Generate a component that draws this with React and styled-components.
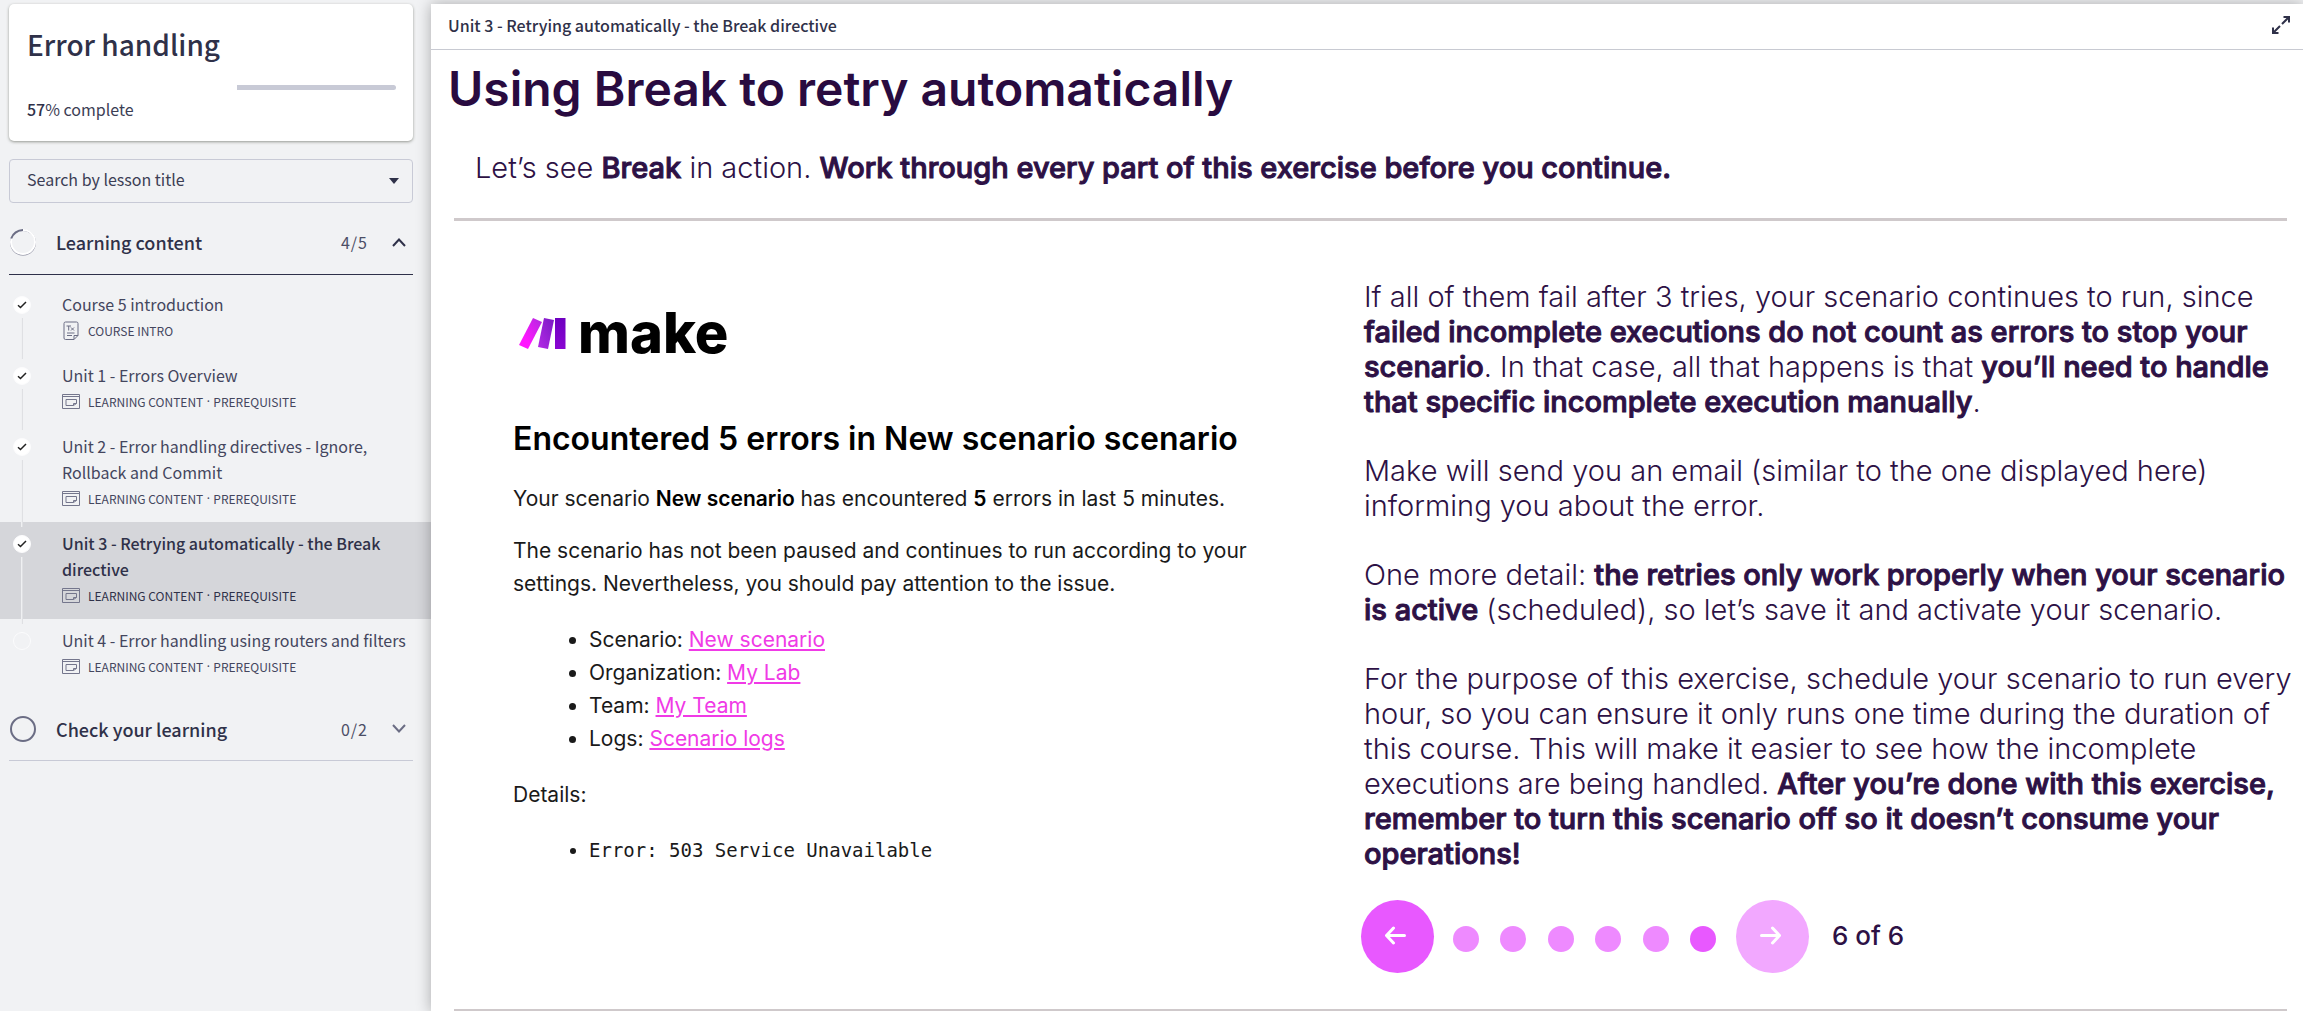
import React from "react";
import styled, { createGlobalStyle, css } from "styled-components";

const GlobalStyle = createGlobalStyle`
  *, *::before, *::after { box-sizing: border-box; }
  body {
    margin: 0;
    background: #f1f2f4;
    color: #2f3149;
    font-family: "Noto Sans CJK SC", "Noto Sans", sans-serif;
  }
  h1, h2, h3, p, ul, ol { margin: 0; padding: 0; }
  button, select { font: inherit; color: inherit; }
`;

const Page = styled.div`
  display: flex;
  min-height: 100vh;
  padding-top: 4px;
`;

/* Sidebar */

const Sidebar = styled.aside`
  flex: 0 0 431px;
  min-width: 0;
`;

const CourseCard = styled.section`
  margin: 0 18px 18px 9px;
  padding: 20px 17px 18px 18px;
  background: #fff;
  border-radius: 5px;
  box-shadow: 0 1px 3px rgba(60, 64, 50, 0.5);
`;

const CourseTitle = styled.h1`
  font-size: 28px;
  line-height: 40px;
  font-weight: 500;
`;

const ProgressTrack = styled.div`
  display: flex;
  justify-content: flex-end;
  height: 5px;
  margin: 21px 0 5px;
`;

const ProgressRest = styled.div`
  height: 5px;
  border-radius: 0 3px 3px 0;
  background: #c8cad6;
`;

const ProgressText = styled.p`
  font-size: 16px;
  line-height: 28px;
  color: #3c3e55;
  strong { font-weight: 500; color: #2f3149; }
`;

const SelectWrap = styled.label`
  display: grid;
  align-items: center;
  margin: 0 18px 0 9px;
  > * { grid-area: 1 / 1; }
  svg { justify-self: end; margin-right: 14px; pointer-events: none; }
`;

const LessonSelect = styled.select`
  appearance: none;
  width: 100%;
  height: 44px;
  padding: 0 17px 4px;
  border: 1px solid #c8cad6;
  border-radius: 4px;
  background: #f1f2f4;
  color: #3c3e55;
  font-size: 16px;
`;

const SectionButton = styled.button`
  display: flex;
  align-items: center;
  width: calc(100% - 27px);
  height: ${(p) => (p.$open ? 72 : 71)}px;
  margin: 0 18px 0 9px;
  padding: 7px 7px 0 1px;
  border: 0;
  border-bottom: 1px solid ${(p) => (p.$open ? "#2f3149" : "#c8cad6")};
  background: none;
  text-align: left;
`;

const SectionTitle = styled.span`
  flex: 1;
  margin-left: 20px;
  font-size: 18px;
  line-height: 26px;
  font-weight: 500;
`;

const SectionCount = styled.span`
  margin-right: 24px;
  font-size: 16px;
  line-height: 26px;
  letter-spacing: 1px;
  color: #4c4e66;
`;

const LessonList = styled.ol`
  list-style: none;
  padding: 8px 0 0;
`;

const Lesson = styled.li`
  display: flex;
  padding-left: 13px;
  ${(p) => p.$active && css`background: #d5d6da;`}
`;

const Rail = styled.span`
  display: flex;
  flex-direction: column;
  align-items: center;
  flex: 0 0 18px;
  margin: 13px 31px -9px 0;
`;

const Marker = styled.span`
  display: flex;
  align-items: center;
  justify-content: center;
  flex: 0 0 18px;
  width: 18px;
  border: 1px solid #fcfcfd;
  border-radius: 50%;
  background: ${(p) => (p.$done ? "#fff" : "transparent")};
`;

const RailLine = styled.span`
  position: relative;
  flex: 1;
  width: 2px;
  margin: 4px 0;
  background: #dfe0e3;
  box-shadow: inset 1px 0 #eff0f2;
`;

const LessonLink = styled.a`
  flex: 1;
  min-width: 0;
  padding: 8px 18px 10px 0;
  color: ${(p) => (p.$active ? "#2f3149" : "#44465e")};
  text-decoration: none;
  font-size: 16px;
  line-height: 26px;
  font-weight: ${(p) => (p.$active ? 500 : 400)};
`;

const Meta = styled.span`
  display: flex;
  align-items: center;
  height: 27px;
  font-size: 12px;
  font-weight: 400;
  svg { flex: 0 0 18px; margin-right: 8px; }
`;

const Separator = styled.span`
  width: 10px;
  font-family: "Noto Sans", sans-serif;
  text-align: center;
`;

/* Main pane */

const Main = styled.main`
  position: relative;
  flex: 1;
  min-width: 0;
  background: #fff;
  box-shadow: 0 0 14px rgba(0, 0, 0, 0.3);
`;

const TopBar = styled.header`
  display: flex;
  align-items: center;
  justify-content: space-between;
  height: 46px;
  padding: 0 13px 3px 17px;
  border-bottom: 1px solid #c8cad2;
  font-size: 16px;
  font-weight: 500;
`;

const IconButton = styled.button`
  display: flex;
  padding: 0;
  border: 0;
  background: none;
`;

const Slide = styled.article`
  padding: 0 16px 0 23px;
  color: #2d1145;
  font-family: Inter, "Open Sans", sans-serif;
`;

const SlideTitle = styled.h2`
  margin-left: -6px;
  padding-top: 9px;
  font-size: 48px;
  line-height: 60px;
  font-weight: 600;
  color: #290b40;
`;

const Strong = styled.strong`
  font-weight: 500;
  -webkit-text-stroke: 1px currentColor;
  paint-order: stroke;
`;

const Intro = styled.p`
  padding: 31px 21px 33px;
  font-size: 29px;
  line-height: 35px;
  font-weight: 300;
`;

const Rule = styled.hr`
  height: 3px;
  margin: 0;
  border: 0;
  background: #cfc9cb;
`;

const Columns = styled.div`
  display: grid;
  grid-template-columns: 910fr 923fr;
`;

const Email = styled.section`
  max-width: 815px;
  padding: 82px 0 0 59px;
  color: #1a1a1a;
  font-size: 21px;
  line-height: 33px;
  a { color: #f03ae6; text-decoration: underline; }
  strong { font-weight: 600; color: #000; }
`;

const Logo = styled.div`
  display: flex;
  align-items: center;
  height: 60px;
  padding-left: 6px;
  color: #000;
  font-size: 56px;
  line-height: 60px;
  font-weight: 800;
  svg { margin-right: 11px; }
`;

const EmailTitle = styled.h3`
  margin: 56px 0 23px;
  color: #000;
  font-size: 32px;
  line-height: 40px;
  font-weight: 600;
  white-space: nowrap;
`;

const EmailText = styled.p`
  margin-bottom: 19px;
`;

const EmailList = styled.ul`
  margin: 23px 0;
  padding-left: 76px;
  ${(p) => p.$mono && css`
    font-family: "DejaVu Sans Mono", "Liberation Mono", monospace;
    font-size: 19px;
  `}
`;

const Lecture = styled.section`
  margin-right: -12px;
  padding-top: 58px;
  font-size: 29px;
  line-height: 35px;
  font-weight: 300;
  p { margin-bottom: 34px; }
`;

const Pager = styled.nav`
  display: flex;
  align-items: center;
  height: 73px;
  margin: -5px 0 36px -3px;
`;

const PagerButton = styled.button`
  display: flex;
  align-items: center;
  justify-content: center;
  width: 73px;
  height: 73px;
  padding: 0 4px 3px 0;
  border: 0;
  border-radius: 50%;
  background: ${(p) => (p.disabled ? "#f2a8ff" : "#e858ff")};
`;

const Dots = styled.div`
  display: flex;
  justify-content: space-between;
  width: 263px;
  margin: 4px 20px 0 19px;
`;

const Dot = styled.button`
  width: 26px;
  height: 26px;
  padding: 0;
  border: 0;
  border-radius: 50%;
  background: ${(p) => (p.$current ? "#e858ff" : "#ee8aff")};
`;

const PageCount = styled.span`
  margin-left: 23px;
  padding-bottom: 2px;
  font-size: 26px;
  font-weight: 500;
`;

/* Icons */

const Check = () => (
  <svg width="10" height="8" viewBox="0 0 10 8" fill="none" stroke="#222" strokeWidth="1.5" aria-hidden="true">
    <path d="M1 4.2 3.5 6.5 9 1" />
  </svg>
);

const DocIcon = () => (
  <svg width="18" height="20" viewBox="0 0 18 20" fill="none" stroke="#6b6d84" aria-hidden="true">
    <path d="M12 18.5H3.5a1.5 1.5 0 0 1-1.5-1.5V2.5A1.5 1.5 0 0 1 3.5 1H14.5A1.5 1.5 0 0 1 16 2.5V14.5ZM12 18.5V14.5H16" />
    <path d="M4.5 5H9M6.7 5V9.5M9 6.5 12 9.5M12 6.5 9 9.5M5 12H12.5M5 14.5H10" />
  </svg>
);

const SlideIcon = () => (
  <svg width="18" height="15" viewBox="0 0 18 15" fill="none" stroke="#74768c" aria-hidden="true">
    <path d="M.5 .5H17.5V14.5H.5ZM.5 2.5H17.5" />
    <path d="M11.5 11.5H4V5.5H14.5V9.5ZM11.5 11.5V9.5H14.5" />
  </svg>
);

const Chevron = ({ up }) => (
  <svg width="14" height="9" viewBox="0 0 14 9" fill="none" stroke={up ? "#2f3149" : "#6b6d84"} strokeWidth="2" aria-hidden="true">
    <path d={up ? "M1 8 7 1.5 13 8" : "M1 1 7 7.5 13 1"} />
  </svg>
);

const RingPartial = () => (
  <svg width="26" height="28" viewBox="0 0 26 28" fill="none" aria-hidden="true">
    <circle cx="13" cy="14.5" r="12.3" stroke="#74768c" strokeWidth="1.4" />
    <circle cx="13" cy="14" r="12" stroke="#fff" strokeWidth="2" />
    <path d="M1.2 10.5A12.3 12.3 0 0 1 13 2" stroke="#6b6d84" strokeWidth="2" />
  </svg>
);

const RingEmpty = () => (
  <svg width="26" height="28" viewBox="0 0 26 28" fill="none" aria-hidden="true">
    <circle cx="13" cy="14" r="12" stroke="#6b6d84" strokeWidth="2" />
  </svg>
);

const Expand = () => (
  <svg width="18" height="18" viewBox="0 0 18 18" fill="none" stroke="#2f3149" strokeWidth="2" aria-hidden="true">
    <path d="M10 8 17 1M11.5 1H17V6.5M8 10 1 17M6.5 17H1V11.5" />
  </svg>
);

const Arrow = ({ right }) => (
  <svg width="21" height="19" viewBox="0 0 21 19" fill="none" stroke="#fff" strokeWidth="3" strokeLinecap="round" strokeLinejoin="round" aria-hidden="true">
    <path d={right ? "M1.5 9.5H19M12.5 2 19.5 9.5 12.5 17" : "M19.5 9.5H2M8.5 2 1.5 9.5 8.5 17"} />
  </svg>
);

const MakeMark = () => (
  <svg width="48" height="34" viewBox="0 0 48 34" aria-hidden="true">
    <defs>
      <linearGradient id="m1" x1="0" y1="1" x2="1" y2="0">
        <stop offset="0.3" stopColor="#ff17ff" />
        <stop offset="1" stopColor="#b02ade" />
      </linearGradient>
      <linearGradient id="m2" x1="0" y1="1" x2="1" y2="0">
        <stop offset="0" stopColor="#b42be6" />
        <stop offset="1" stopColor="#7a18c4" />
      </linearGradient>
      <linearGradient id="m3" x1="0" y1="1" x2="0" y2="0">
        <stop offset="0" stopColor="#8a06d2" />
        <stop offset="1" stopColor="#6e00c0" />
      </linearGradient>
    </defs>
    <path d="M14 2 23 6 9 33 0 29Z" fill="url(#m1)" />
    <path d="M25 2 35 4 29 33 19 31Z" fill="url(#m2)" />
    <path d="M36 2H46.5V33H36Z" fill="url(#m3)" />
  </svg>
);

const lessons = [
  { title: "Course 5 introduction", intro: true, done: true },
  { title: "Unit 1 - Errors Overview", done: true },
  { title: "Unit 2 - Error handling directives - Ignore, Rollback and Commit", done: true },
  { title: "Unit 3 - Retrying automatically - the Break directive", done: true, active: true },
  { title: "Unit 4 - Error handling using routers and filters" },
];

const emailLinks = [
  ["Scenario", "New scenario"],
  ["Organization", "My Lab"],
  ["Team", "My Team"],
  ["Logs", "Scenario logs"],
];

export default function App() {
  return (
    <>
      <GlobalStyle />
      <Page>
        <Sidebar>
          <CourseCard>
            <CourseTitle>Error handling</CourseTitle>
            <ProgressTrack role="progressbar" aria-label="Course progress" aria-valuenow={57} aria-valuemin={0} aria-valuemax={100}>
              <ProgressRest style={{ width: `${100 - 57}%` }} />
            </ProgressTrack>
            <ProgressText><strong>57</strong>% complete</ProgressText>
          </CourseCard>
          <SelectWrap>
            <LessonSelect aria-label="Search by lesson title" defaultValue="">
              <option value="">Search by lesson title</option>
            </LessonSelect>
            <svg width="10" height="6" viewBox="0 0 10 6" fill="#2f3149" aria-hidden="true"><path d="M0 0H10L5 6Z" /></svg>
          </SelectWrap>
          <SectionButton $open aria-expanded="true">
            <RingPartial />
            <SectionTitle>Learning content</SectionTitle>
            <SectionCount>4/5</SectionCount>
            <Chevron up />
          </SectionButton>
          <LessonList>
            {lessons.map((l, i) => (
              <Lesson key={l.title} $active={l.active}>
                <Rail>
                  <Marker $done={l.done}>{l.done && <Check />}</Marker>
                  {i < lessons.length - 1 && <RailLine />}
                </Rail>
                <LessonLink href="#" $active={l.active}>
                  {l.title}
                  {l.intro ? (
                    <Meta><DocIcon />COURSE INTRO</Meta>
                  ) : (
                    <Meta><SlideIcon />LEARNING CONTENT<Separator>·</Separator>PREREQUISITE</Meta>
                  )}
                </LessonLink>
              </Lesson>
            ))}
          </LessonList>
          <SectionButton aria-expanded="false">
            <RingEmpty />
            <SectionTitle>Check your learning</SectionTitle>
            <SectionCount>0/2</SectionCount>
            <Chevron />
          </SectionButton>
        </Sidebar>
        <Main>
          <TopBar>
            <span>Unit 3 - Retrying automatically - the Break directive</span>
            <IconButton aria-label="Full screen"><Expand /></IconButton>
          </TopBar>
          <Slide>
            <SlideTitle>Using Break to retry automatically</SlideTitle>
            <Intro>
              Let’s see <Strong>Break</Strong> in action. <Strong>Work through every part of this exercise before you continue.</Strong>
            </Intro>
            <Rule />
            <Columns>
              <Email>
                <Logo><MakeMark />make</Logo>
                <EmailTitle>Encountered 5 errors in New scenario scenario</EmailTitle>
                <EmailText>Your scenario <strong>New scenario</strong> has encountered <strong>5</strong> errors in last 5 minutes.</EmailText>
                <EmailText>The scenario has not been paused and continues to run according to your settings. Nevertheless, you should pay attention to the issue.</EmailText>
                <EmailList>
                  {emailLinks.map(([label, text]) => (
                    <li key={label}>{label}: <a href="#">{text}</a></li>
                  ))}
                </EmailList>
                <EmailText>Details:</EmailText>
                <EmailList $mono><li>Error: 503 Service Unavailable</li></EmailList>
              </Email>
              <Lecture>
                <p>If all of them fail after 3 tries, your scenario continues to run, since <Strong>failed incomplete executions do not count as errors to stop your scenario</Strong>. In that case, all that happens is that <Strong>you’ll need to handle that specific incomplete execution manually</Strong>.</p>
                <p>Make will send you an email (similar to the one displayed here) informing you about the error.</p>
                <p>One more detail: <Strong>the retries only work properly when your scenario is active</Strong> (scheduled), so let’s save it and activate your scenario.</p>
                <p>For the purpose of this exercise, schedule your scenario to run every hour, so you can ensure it only runs one time during the duration of this course. This will make it easier to see how the incomplete executions are being handled. <Strong>After you’re done with this exercise, remember to turn this scenario off so it doesn’t consume your operations!</Strong></p>
                <Pager aria-label="Slides">
                  <PagerButton aria-label="Previous"><Arrow /></PagerButton>
                  <Dots>
                    {[1, 2, 3, 4, 5, 6].map((n) => (
                      <Dot key={n} $current={n === 6} aria-label={`Slide ${n}`} />
                    ))}
                  </Dots>
                  <PagerButton disabled aria-label="Next"><Arrow right /></PagerButton>
                  <PageCount>6 of 6</PageCount>
                </Pager>
              </Lecture>
            </Columns>
            <Rule />
          </Slide>
        </Main>
      </Page>
    </>
  );
}
